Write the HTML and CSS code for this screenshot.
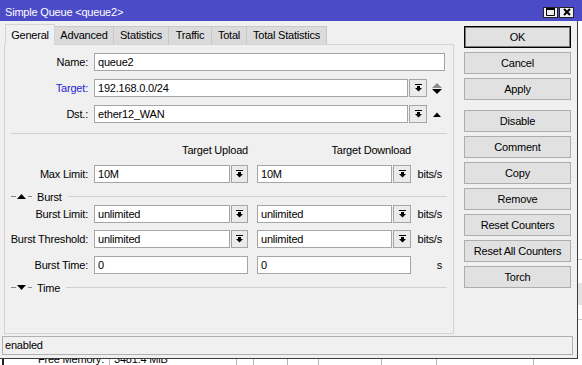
FILE: index.html
```html
<!DOCTYPE html>
<html lang="en">

<head>
    <meta charset="UTF-8">
    <meta name="viewport" content="width=device-width, initial-scale=1.0">
    <title>Simple Queue &lt;queue2&gt;</title>
    <link rel="stylesheet" href="styles.css">
</head>

<body>
    <!-- main winbox window, behind the dialog -->
    <div class="desktop">
        <div class="desk-top"></div>
        <div class="desk-line"></div>
        <div class="desk-band"></div>
        <div class="desk-line desk-line-low"></div>
        <div class="mem-row">
            <span class="mem-label">Free Memory:</span>
            <span class="mem-cell mem-value">3481.4 MiB</span>
            <span class="mem-cell mc-a"></span>
            <span class="mem-cell mc-b"></span>
            <span class="mem-cell mc-c"></span>
            <span class="mem-cell mc-d"></span>
            <span class="mem-cell mc-e"></span>
            <span class="mem-cell mc-f"></span>
            <span class="mem-cell"></span>
        </div>
    </div>

    <div class="window">
        <div class="titlebar">
            <span class="title">Simple Queue &lt;queue2&gt;</span>
            <span class="tb-btn">
                <svg width="9" height="8" viewBox="0 0 9 8"><path d="M0.5 1.5h8v6h-8z" fill="none" stroke="#000" /><rect x="0" y="0" width="9" height="2" /></svg>
            </span>
            <span class="tb-btn">
                <svg width="8" height="8" viewBox="0 0 8 8"><path d="M1 1L7 7M7 1L1 7" stroke="#000" stroke-width="2" /></svg>
            </span>
        </div>

        <div class="win-body">
            <div class="main">
                <div class="left">
                    <div class="tabs">
                        <span class="tab active t-general">General</span>
                        <span class="tab t-advanced">Advanced</span>
                        <span class="tab t-statistics">Statistics</span>
                        <span class="tab t-traffic">Traffic</span>
                        <span class="tab t-total">Total</span>
                        <span class="tab t-totalstats">Total Statistics</span>
                    </div>

                    <div class="panel">
                        <div class="row">
                            <span class="label">Name:</span>
                            <span class="field f-name">queue2</span>
                        </div>
                        <div class="row gap8">
                            <span class="label blue">Target:</span>
                            <span class="field f-target">192.168.0.0/24</span>
                            <span class="dd dd-wide"><svg width="7" height="8" viewBox="0 0 7 8"><rect x="0" y="0" width="7" height="1" /><rect x="2" y="2" width="3" height="2" /><path d="M0 4h7L3.5 7.5z" /></svg></span>
                            <svg class="updown" width="10" height="11" viewBox="0 0 10 11"><path d="M0 5L5 0L10 5z" fill="#8c8c8c" /><path d="M0 6h10L5 11z" fill="#000" /></svg>
                        </div>
                        <div class="row gap8">
                            <span class="label">Dst.:</span>
                            <span class="field f-target">ether12_WAN</span>
                            <span class="dd dd-wide"><svg width="7" height="8" viewBox="0 0 7 8"><rect x="0" y="0" width="7" height="1" /><rect x="2" y="2" width="3" height="2" /><path d="M0 4h7L3.5 7.5z" /></svg></span>
                            <svg class="updown" width="10" height="11" viewBox="0 0 10 11"><path d="M1 8L5 3.5L9 8z" fill="#000" /></svg>
                        </div>

                        <div class="sep"></div>

                        <div class="hdr-row">
                            <span class="hdr">Target Upload</span>
                            <span class="hdr hdr-down">Target Download</span>
                        </div>

                        <div class="row gap8">
                            <span class="label">Max Limit:</span>
                            <span class="field f-up">10M</span>
                            <span class="dd"><svg width="7" height="8" viewBox="0 0 7 8"><rect x="0" y="0" width="7" height="1" /><rect x="2" y="2" width="3" height="2" /><path d="M0 4h7L3.5 7.5z" /></svg></span>
                            <span class="field f-down">10M</span>
                            <span class="dd dd-wide"><svg width="7" height="8" viewBox="0 0 7 8"><rect x="0" y="0" width="7" height="1" /><rect x="2" y="2" width="3" height="2" /><path d="M0 4h7L3.5 7.5z" /></svg></span>
                            <span class="unit">bits/s</span>
                        </div>

                        <div class="toggle">
                            <span class="dash"></span>
                            <svg class="tri" width="9" height="5" viewBox="0 0 9 5"><path d="M0 5L4.5 0L9 5z" /></svg>
                            <span class="dash dash-r"></span>
                            <span class="toggle-text">Burst</span>
                            <span class="toggle-line"></span>
                        </div>

                        <div class="row gap2">
                            <span class="label">Burst Limit:</span>
                            <span class="field f-up">unlimited</span>
                            <span class="dd"><svg width="7" height="8" viewBox="0 0 7 8"><rect x="0" y="0" width="7" height="1" /><rect x="2" y="2" width="3" height="2" /><path d="M0 4h7L3.5 7.5z" /></svg></span>
                            <span class="field f-down">unlimited</span>
                            <span class="dd dd-wide"><svg width="7" height="8" viewBox="0 0 7 8"><rect x="0" y="0" width="7" height="1" /><rect x="2" y="2" width="3" height="2" /><path d="M0 4h7L3.5 7.5z" /></svg></span>
                            <span class="unit">bits/s</span>
                        </div>
                        <div class="row gap7">
                            <span class="label">Burst Threshold:</span>
                            <span class="field f-up">unlimited</span>
                            <span class="dd"><svg width="7" height="8" viewBox="0 0 7 8"><rect x="0" y="0" width="7" height="1" /><rect x="2" y="2" width="3" height="2" /><path d="M0 4h7L3.5 7.5z" /></svg></span>
                            <span class="field f-down">unlimited</span>
                            <span class="dd dd-wide"><svg width="7" height="8" viewBox="0 0 7 8"><rect x="0" y="0" width="7" height="1" /><rect x="2" y="2" width="3" height="2" /><path d="M0 4h7L3.5 7.5z" /></svg></span>
                            <span class="unit">bits/s</span>
                        </div>
                        <div class="row gap8">
                            <span class="label">Burst Time:</span>
                            <span class="field f-half">0</span>
                            <span class="field f-half f-half-r">0</span>
                            <span class="unit">s</span>
                        </div>

                        <div class="toggle">
                            <span class="dash"></span>
                            <svg class="tri" width="9" height="5" viewBox="0 0 9 5"><path d="M0 0h9L4.5 5z" /></svg>
                            <span class="dash dash-r"></span>
                            <span class="toggle-text">Time</span>
                            <span class="toggle-line"></span>
                        </div>
                    </div>
                </div>

                <div class="buttons">
                    <button class="btn btn-default">OK</button>
                    <button class="btn">Cancel</button>
                    <button class="btn">Apply</button>
                    <button class="btn btn-group">Disable</button>
                    <button class="btn">Comment</button>
                    <button class="btn">Copy</button>
                    <button class="btn">Remove</button>
                    <button class="btn">Reset Counters</button>
                    <button class="btn">Reset All Counters</button>
                    <button class="btn">Torch</button>
                </div>
            </div>

            <div class="status">enabled</div>
        </div>
    </div>
</body>

</html>
```

FILE: styles.css
```css
html,
body {
    margin: 0;
    padding: 0;
    overflow: hidden;
}

body {
    width: 582px;
    height: 365px;
    position: relative;
    background-color: #fff;
    font-family: 'Liberation Sans', Arial, sans-serif;
    font-size: 11px;
    letter-spacing: -0.2px;
    color: #000;
}

/* background window */
.desktop {
    height: 365px;
}

.desk-top {
    height: 259px;
}

.desk-line {
    height: 1px;
    background-color: #c8c8c8;
}

.desk-band {
    height: 22px;
    margin-top: 23px;
    background-color: #e3e3e3;
}

.desk-line-low {
    margin-top: 14px;
}

.mem-row {
    display: flex;
    height: 15px;
    margin-top: 32px;
    margin-left: 2px;
    border-left: 2px solid #222;
    line-height: 15px;
}

.mem-label {
    width: 100px;
    text-align: right;
}

.mem-cell {
    border-left: 1px solid #b5b5b5;
    height: 15px;
    box-sizing: border-box;
}

.mem-value {
    margin-left: 5px;
    width: 127px;
    padding-left: 4px;
}

.mc-a {
    width: 17px;
}

.mc-b {
    width: 34px;
}

.mc-c {
    width: 31px;
}

.mc-d {
    width: 63px;
}

.mc-e {
    width: 55px;
}

.mc-f {
    width: 97px;
}

/* dialog window */
.window {
    position: absolute;
    top: 0;
    left: 0;
    width: 577px;
    background-color: #f0f0f0;
    border-right: 1px solid #3c3c3c;
    border-bottom: 1px solid #3c3c3c;
}

.titlebar {
    width: 582px;
    height: 21px;
    box-sizing: border-box;
    padding: 3px 8px 0 5px;
    display: flex;
    align-items: center;
    gap: 1px;
    background-color: #4b4bc8;
    color: #fff;
}

.title {
    flex: 1;
    font-size: 11px;
}

.tb-btn {
    width: 15px;
    height: 11px;
    box-sizing: border-box;
    display: flex;
    align-items: center;
    justify-content: center;
    background-color: #f0f0f0;
    border: 1px solid #222;
}

.win-body {
    padding: 2px 0 3px 0;
}

.main {
    display: flex;
}

.left {
    width: 450px;
    margin-left: 4px;
}

.tabs {
    display: flex;
    align-items: flex-end;
    height: 21px;
    padding-left: 1px;
}

.tab {
    height: 18px;
    box-sizing: border-box;
    border: 1px solid #c8c8c8;
    border-bottom: none;
    border-left: none;
    background-color: #dbdbdb;
    text-align: center;
    line-height: 17px;
}

.tab.active {
    height: 21px;
    border-left: 1px solid #d4d4d4;
    border-color: #d4d4d4;
    background-color: #f0f0f0;
    line-height: 21px;
    position: relative;
    top: 1px;
}

.t-general {
    width: 50px;
}

.t-advanced {
    width: 59px;
}

.t-statistics {
    width: 55px;
}

.t-traffic {
    width: 43px;
}

.t-total {
    width: 35px;
}

.t-totalstats {
    width: 80px;
}

.panel {
    height: 290px;
    box-sizing: border-box;
    padding-top: 8px;
    border: 1px solid #d4d4d4;
}

.row {
    display: flex;
    align-items: center;
    height: 18px;
}

.gap8 {
    margin-top: 8px;
}

.gap7 {
    margin-top: 7px;
}

.gap2 {
    margin-top: 2px;
}

.label {
    width: 83px;
    margin-right: 6px;
    text-align: right;
    white-space: nowrap;
}

.blue {
    color: #2424d4;
}

.field {
    height: 18px;
    box-sizing: border-box;
    padding-left: 3px;
    border: 1px solid #a5a5a5;
    background-color: #fff;
    line-height: 16px;
    white-space: nowrap;
    overflow: hidden;
}

.f-name {
    width: 351px;
}

.f-target {
    width: 314px;
}

.f-up {
    width: 136px;
}

.f-down {
    width: 135px;
    margin-left: 9px;
}

.f-half {
    width: 154px;
}

.f-half-r {
    margin-left: 9px;
}

.dd {
    width: 17px;
    height: 18px;
    box-sizing: border-box;
    margin-left: 1px;
    display: flex;
    align-items: center;
    justify-content: center;
    border: 1px solid #a5a5a5;
    background-color: #ebebeb;
}

.dd-wide {
    width: 18px;
}

.updown {
    margin-left: 5px;
}

.unit {
    width: 27px;
    margin-left: 4px;
    text-align: right;
}

.sep {
    height: 1px;
    margin: 10px 6px 0 6px;
    background-color: #d0d0d0;
}

.hdr-row {
    display: flex;
    height: 14px;
    margin-top: 9px;
    padding-left: 89px;
    line-height: 14px;
}

.hdr {
    width: 154px;
    text-align: right;
}

.hdr-down {
    margin-left: 9px;
}

.toggle {
    display: flex;
    align-items: center;
    height: 13px;
    margin: 7px 6px 0 6px;
}

.dash {
    width: 5px;
    height: 1px;
    background-color: #8a8a8a;
}

.tri {
    margin-left: 1px;
}

.dash-r {
    width: 4px;
    margin-left: 2px;
}

.toggle-text {
    margin-left: 5px;
}

.toggle-line {
    flex: 1;
    height: 1px;
    margin-left: 6px;
    background-color: #d0d0d0;
}

.buttons {
    display: flex;
    flex-direction: column;
    margin-left: 10px;
    margin-top: 3px;
}

.btn {
    width: 107px;
    height: 22px;
    margin-bottom: 4px;
    padding: 0;
    font: inherit;
    letter-spacing: inherit;
    color: #000;
    background-color: #e1e1e1;
    border: 1px solid #adadad;
}

.btn-default {
    border-color: #000;
    box-shadow: inset 0 0 0 1px #7a7a7a;
}

.btn-group {
    margin-top: 6px;
}

.status {
    height: 19px;
    box-sizing: border-box;
    margin: 2px 4px 0 2px;
    padding-left: 2px;
    border: 1px solid #b0b0b0;
    line-height: 17px;
}
```
